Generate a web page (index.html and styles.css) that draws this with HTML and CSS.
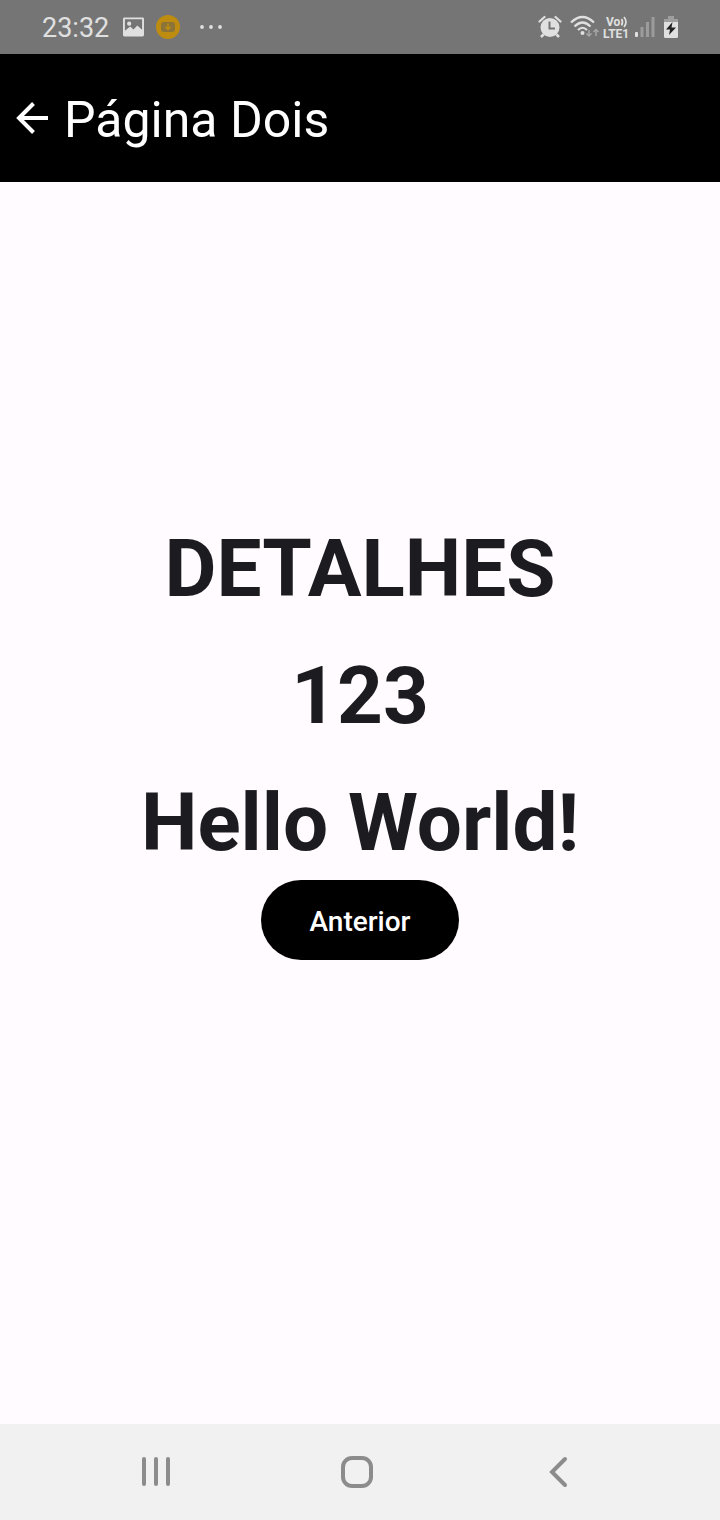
FILE: index.html
```html
<!DOCTYPE html>
<html lang="pt-BR">
<head>
  <meta charset="utf-8">
  <meta name="viewport" content="width=device-width, initial-scale=1">
  <title>Página Dois</title>
  <link rel="stylesheet" href="styles.css">
</head>
<body>
  <div class="status-bar">
    <div class="status-left">
      <time class="clock">23:32</time>
      <svg width="21" height="20" viewBox="0 0 22 20" aria-hidden="true">
        <path fill="#e0e0e0" fill-rule="evenodd" d="M1.500 0H20.500Q22 0 22 1.500V18.500Q22 20 20.500 20H1.500Q0 20 0 18.500V1.500Q0 0 1.500 0ZM2 2V14L7.500 9.500L11 12.500L15 8.500L20 13V2Z"/>
        <circle cx="6.500" cy="6.500" r="2.200" fill="#e0e0e0"/>
      </svg>
      <svg width="24" height="24" viewBox="0 0 24 24" aria-hidden="true">
        <circle cx="12" cy="12" r="12" fill="#bf8c12"/>
        <rect x="5" y="7" width="14" height="10" rx="3" fill="#8c7338"/>
        <path d="M12 8.500v5.500M9.500 12l2.500 2.500 2.500-2.500" fill="none" stroke="#bf8c12" stroke-width="1.500"/>
      </svg>
      <svg class="dots" width="22" height="4" viewBox="0 0 22 4" fill="#e0e0e0" aria-hidden="true">
        <circle cx="2" cy="2" r="1.900"/><circle cx="11" cy="2" r="1.900"/><circle cx="20" cy="2" r="1.900"/>
      </svg>
    </div>
    <div class="status-right">
      <svg width="24" height="24" viewBox="0 0 24 24" aria-hidden="true">
        <path d="M5.500 19.500L3 22M18.500 19.500L21 22" stroke="#e0e0e0" stroke-width="2.600"/>
        <path d="M1.500 6.500L6.500 2M22.500 6.500L17.500 2" stroke="#e0e0e0" stroke-width="2.200" stroke-linecap="round"/>
        <circle cx="12" cy="12.500" r="9.500" fill="#e0e0e0"/>
        <path d="M11.500 6.500V13.500H17" fill="none" stroke="#757575" stroke-width="2"/>
      </svg>
      <svg class="wifi" width="29" height="24" viewBox="0 0 29 24" aria-hidden="true">
        <g fill="none" stroke="#e0e0e0" stroke-width="2.200">
          <path d="M1 7.500Q12.500-3.500 24 7.500"/>
          <path d="M4.500 11.500Q12.500 3.500 20.500 11.500"/>
          <path d="M8 15Q12.500 10.500 17 15"/>
        </g>
        <circle cx="12.500" cy="18" r="2" fill="#e0e0e0"/>
        <path d="M19 15v6M16.500 18.500l2.500 2.500 2.500-2.500M26 21v-6.500M23.500 17l2.500-2.500 2.500 2.500" fill="none" stroke="#a6a6a6" stroke-width="1.500"/>
      </svg>
      <svg width="28" height="26" viewBox="0 0 28 26" aria-hidden="true">
        <text class="network" x="3" y="12">Vo</text>
        <path d="M18.500 5Q20.500 8 18.500 11.500M21 3Q25 8 21 13" fill="none" stroke="#e0e0e0" stroke-width="1.700"/>
        <text class="network" x="0" y="24">LTE1</text>
      </svg>
      <svg width="20" height="22" viewBox="0 0 20 22" aria-hidden="true">
        <rect x="0" y="16" width="3" height="5" rx="1" fill="#e0e0e0"/>
        <path d="M5.500 11h3v10h-3zM11 6h3v15h-3zM16.500 1h3v20h-3z" fill="#9c9c9c"/>
      </svg>
      <svg class="battery" width="14" height="22" viewBox="0 0 14 22" aria-hidden="true">
        <path d="M4 0h6v3h4v4H0V3h4z" fill="#9e9e9e"/>
        <path d="M0 6h14v14.500q0 1.500-1.500 1.500h-11Q0 22 0 20.500z" fill="#e0e0e0"/>
        <path d="M8.500 6L2 13.500H6L5 19L12 11.500H7.500Z" fill="#222"/>
      </svg>
    </div>
  </div>

  <header class="app-bar">
    <button class="back" type="button" aria-label="Voltar">
      <svg width="32" height="32" viewBox="0 0 32 32" aria-hidden="true">
        <path d="M32 16H3M17.500 1.500L3 16L17.500 30.500" fill="none" stroke="#fff" stroke-width="4"/>
      </svg>
    </button>
    <h1 class="title">Página Dois</h1>
  </header>

  <main class="content">
    <div class="details">
      <h2 class="line">DETALHES</h2>
      <p class="line">123</p>
      <p class="line">Hello World!</p>
    </div>
    <button class="previous" type="button">Anterior</button>
  </main>

  <nav class="nav-bar" aria-label="Sistema">
    <button class="nav-button" type="button" aria-label="Recentes">
      <svg width="28" height="32" viewBox="0 0 28 32" aria-hidden="true">
        <path d="M2 3V28M14 3V28M26 3V28" stroke="#8c8c8c" stroke-width="4" stroke-linecap="round"/>
      </svg>
    </button>
    <button class="nav-button" type="button" aria-label="Início">
      <svg width="32" height="32" viewBox="0 0 32 32" aria-hidden="true">
        <rect x="2" y="2" width="28" height="28" rx="9" fill="none" stroke="#8c8c8c" stroke-width="4"/>
      </svg>
    </button>
    <button class="nav-button" type="button" aria-label="Voltar">
      <svg width="20" height="32" viewBox="0 0 20 32" aria-hidden="true">
        <path d="M16 3L3 16L16 29" fill="none" stroke="#8c8c8c" stroke-width="4" stroke-linecap="round"/>
      </svg>
    </button>
  </nav>
</body>
</html>
```
FILE: styles.css
```css
* {
  box-sizing: border-box;
}

body {
  display: flex;
  flex-direction: column;
  min-height: 100vh;
  margin: 0;
  background: #fffbff;
  color: #1c1b1f;
  font-family: Roboto, "Liberation Sans", sans-serif;
}

button {
  display: flex;
  align-items: center;
  justify-content: center;
  margin: 0;
  padding: 0;
  border: 0;
  background: none;
  font-family: inherit;
  cursor: pointer;
}

svg {
  display: block;
  flex: none;
}

.status-bar {
  display: flex;
  align-items: center;
  justify-content: space-between;
  height: 54px;
  padding: 0 42px;
  background: #757575;
  color: #e0e0e0;
}

.status-left {
  display: flex;
  align-items: center;
  gap: 12px;
}

.clock {
  margin-right: 2px;
  padding-top: 2px;
  font-size: 27px;
  line-height: 32px;
}

.dots {
  margin-left: 8px;
}

.status-right {
  display: flex;
  align-items: center;
  gap: 4px;
}

.wifi {
  margin-left: 4px;
}

.network {
  fill: #e0e0e0;
  font-size: 12px;
  font-weight: 700;
}

.battery {
  margin-left: 5px;
}

.app-bar {
  display: flex;
  align-items: center;
  gap: 16px;
  height: 128px;
  padding: 0 16px;
  background: #000;
  color: #fff;
}

.title {
  margin: 0;
  padding-top: 4px;
  font-size: 50px;
  font-weight: 400;
  line-height: 60px;
}

.content {
  display: flex;
  flex: 1;
  flex-direction: column;
  align-items: center;
  justify-content: center;
  gap: 10px;
  padding-bottom: 124px;
}

.details {
  display: flex;
  flex-direction: column;
  gap: 33px;
  text-align: center;
}

.line {
  margin: 0;
  font-size: 80px;
  font-weight: 700;
  line-height: 94px;
}

.previous {
  height: 80px;
  padding: 4px 48px 0;
  border-radius: 40px;
  background: #000;
  color: #fff;
  font-size: 28px;
  font-weight: 500;
  line-height: 40px;
}

.nav-bar {
  display: grid;
  grid-template-columns: repeat(3, 1fr);
  height: 96px;
  padding: 0 60px 0 55px;
  background: #f1f1f1;
}
```
